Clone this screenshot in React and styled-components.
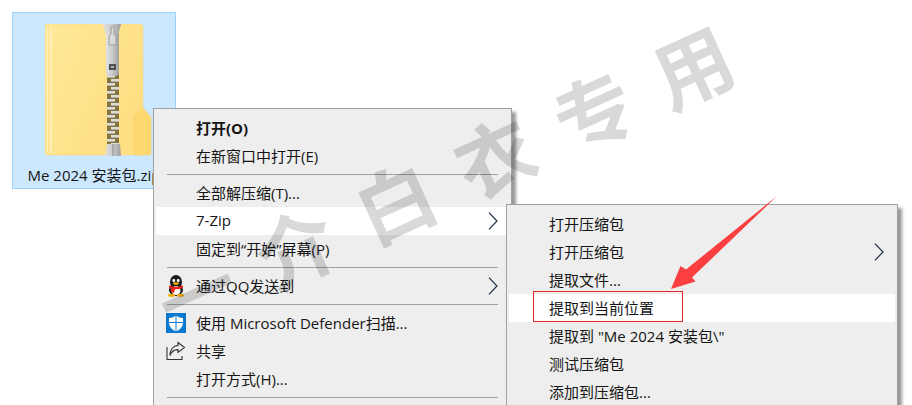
import styled, { createGlobalStyle } from "styled-components";

const GlobalStyle = createGlobalStyle`
  html, body {
    margin: 0;
    padding: 0;
    background: #fff;
  }
`;

const Desktop = styled.div`
  position: relative;
  width: 912px;
  height: 405px;
  overflow: hidden;
  padding: 12px;
  box-sizing: border-box;
  background: #fff;
  font-family: "Open Sans", "Noto Sans CJK SC", sans-serif;
  color: #151515;
`;

const FileTile = styled.div`
  display: flex;
  flex-direction: column;
  align-items: center;
  box-sizing: border-box;
  width: 164px;
  height: 177px;
  padding-top: 11px;
  background: #cce8ff;
  border: 1px solid #99d1ff;
`;

const FolderWrap = styled.div`
  display: flex;
  margin-left: 10px;
`;

const FileName = styled.div`
  margin-top: 7px;
  font-size: 15px;
  line-height: 22px;
  white-space: nowrap;
`;

const Menu = styled.div`
  position: absolute;
  left: ${(p) => p.$left}px;
  top: ${(p) => p.$top}px;
  width: ${(p) => p.$width}px;
  bottom: -20px;
  box-sizing: border-box;
  padding: 5px 2px;
  background: #eee;
  border: 1px solid #a0a0a0;
  box-shadow: 4px 4px 3px rgba(0, 0, 0, 0.4);
`;

const Row = styled.div`
  display: flex;
  align-items: center;
  height: 28px;
  padding-right: 11px;
  font-size: 15px;
  font-weight: ${(p) => (p.$bold ? 700 : 400)};
  background: ${(p) => (p.$active ? "#fff" : "transparent")};
`;

const IconSlot = styled.span`
  display: flex;
  align-items: center;
  justify-content: flex-start;
  flex: none;
  width: 40px;
  padding-left: 10px;
  box-sizing: border-box;
`;

const Label = styled.span`
  flex: 1;
  margin-top: -2px;
  white-space: nowrap;
`;

const Separator = styled.div`
  height: 1px;
  margin: 4px 11px 4px 11px;
  background: #a0a0a0;
`;

const Highlight = styled.div`
  position: absolute;
  left: 533px;
  top: 291px;
  width: 150px;
  height: 31px;
  box-sizing: border-box;
  border: 1px solid #e5282a;
`;

const Overlay = styled.svg`
  position: absolute;
  left: 0;
  top: 0;
  pointer-events: none;
`;

const Watermark = styled.div`
  position: absolute;
  left: 160px;
  top: 267px;
  display: flex;
  gap: 31px;
  font-family: "Noto Sans CJK SC", sans-serif;
  font-size: 78px;
  line-height: 1;
  font-weight: 700;
  color: rgba(0, 0, 0, 0.15);
  transform: rotate(-24.5deg);
  transform-origin: 0 50%;
  pointer-events: none;
  white-space: nowrap;
`;

const Chevron = () => (
  <svg width="10" height="18" viewBox="0 0 10 18">
    <path d="M1 0.7 L9 9 L1 17.3" fill="none" stroke="#1d2b45" strokeWidth="1.2" />
  </svg>
);

const ZipFolder = () => (
  <svg width="108" height="133" viewBox="0 0 108 133">
    <defs>
      <linearGradient id="paper" x1="0" y1="0" x2="1" y2="0.6">
        <stop offset="0" stopColor="#ffe898" />
        <stop offset="1" stopColor="#fedf82" />
      </linearGradient>
      <linearGradient id="metal" x1="0" y1="0" x2="1" y2="0">
        <stop offset="0" stopColor="#e2e2e2" />
        <stop offset="0.5" stopColor="#c9c9c9" />
        <stop offset="1" stopColor="#9f9f9f" />
      </linearGradient>
    </defs>
    <path d="M0 2 Q0 0 2 0 H95 Q98 0 98 3 V131 H1 Q0 131 0 130 Z" fill="url(#paper)" stroke="#f1d27a" strokeWidth="0.5" />
    <rect x="5" y="4" width="2" height="125" fill="#fff0b8" />
    <rect x="2" y="4" width="1" height="125" fill="#fff0b8" />
    <path d="M89 92 L97 83 L106 93 V129 Q106 131 104 131 H91 Q89 131 89 129 Z" fill="#fdd86f" stroke="#f3cd68" strokeWidth="0.5" />
    <rect x="62" y="50" width="12" height="72" fill="#84743f" />
    {Array.from({ length: 18 }, (_, i) => (
      <rect key={i} x={i % 2 ? 66 : 62} y={51 + i * 4} width="8" height="2.6" fill="#dcdcda" />
    ))}
    <path d="M58 0 H76 L73 12 H61 Z" fill="url(#metal)" />
    <path d="M61 9 H74 V50 L72 52 H63 L61 50 Z" fill="url(#metal)" />
    <path d="M66 3 H69 V10 L71 12 V21 H64 V12 L66 10 Z" fill="#d8d8d8" stroke="#8a8a8a" strokeWidth="0.7" />
    <rect x="64" y="40" width="7" height="6" fill="#4f4f4f" />
    <rect x="66" y="42" width="3" height="2" fill="#b0b0b0" />
    <path d="M62 120 H75 L76 132 H60 Z" fill="url(#metal)" />
    <rect x="67.5" y="120" width="1" height="12" fill="#8c8c8c" />
  </svg>
);

const QQIcon = () => (
  <svg width="20" height="22" viewBox="0 0 20 22">
    <ellipse cx="10" cy="7" rx="6" ry="7" fill="#1a1a1a" />
    <ellipse cx="10" cy="15" rx="7" ry="6" fill="#1a1a1a" />
    <ellipse cx="10" cy="15.5" rx="4.5" ry="4.5" fill="#fff" />
    <ellipse cx="7.8" cy="5.5" rx="1.4" ry="1.8" fill="#fff" />
    <ellipse cx="12.2" cy="5.5" rx="1.4" ry="1.8" fill="#fff" />
    <ellipse cx="10" cy="8.6" rx="3" ry="1.3" fill="#f4b400" />
    <path d="M3 10.5 Q10 13 17 10.5 V13 Q10 15.5 3 13 Z" fill="#e5231b" />
    <path d="M5 13 L9 14 L8 18 L5 17 Z" fill="#e5231b" />
    <ellipse cx="5.5" cy="20.3" rx="3.6" ry="1.5" fill="#f2a900" />
    <ellipse cx="14.5" cy="20.3" rx="3.6" ry="1.5" fill="#f2a900" />
  </svg>
);

const ShieldIcon = () => (
  <svg width="20" height="20" viewBox="0 0 20 20">
    <rect width="20" height="20" fill="#0b78d0" />
    <path d="M10 2.5 Q13.5 5 17 5 V10 Q17 15 10 18.5 Q3 15 3 10 V5 Q6.5 5 10 2.5 Z" fill="#fff" />
    <path d="M9.5 2 H10.5 V19 H9.5 Z M2.5 9 H17.5 V10 H2.5 Z" fill="#0b78d0" />
  </svg>
);

const ShareIcon = () => (
  <svg width="20" height="20" viewBox="0 0 20 20" fill="none" stroke="#333" strokeWidth="1.1">
    <path d="M1 6 V18.5 H16 V15" />
    <path d="M12 1.5 L18.5 6.5 L12 11.5 V8.6 C8 8.4 5.5 10.5 4 14.5 C4 9 7 4.8 12 4.4 Z" />
  </svg>
);

const mainItems = [
  { label: "打开(O)", bold: true },
  { label: "在新窗口中打开(E)" },
  { sep: true },
  { label: "全部解压缩(T)..." },
  { label: "7-Zip", active: true, more: true },
  { label: "固定到“开始”屏幕(P)" },
  { sep: true },
  { label: "通过QQ发送到", icon: <QQIcon />, more: true },
  { sep: true },
  { label: "使用 Microsoft Defender扫描...", icon: <ShieldIcon /> },
  { label: "共享", icon: <ShareIcon /> },
  { label: "打开方式(H)..." },
  { sep: true },
];

const subItems = [
  { label: "打开压缩包" },
  { label: "打开压缩包", more: true },
  { label: "提取文件..." },
  { label: "提取到当前位置", active: true },
  { label: "提取到 \"Me 2024 安装包\\\"" },
  { label: "测试压缩包" },
  { label: "添加到压缩包..." },
];

const renderItems = (items) =>
  items.map((item, i) =>
    item.sep ? (
      <Separator key={i} />
    ) : (
      <Row key={i} $bold={item.bold} $active={item.active}>
        <IconSlot>{item.icon}</IconSlot>
        <Label>{item.label}</Label>
        {item.more && <Chevron />}
      </Row>
    )
  );

export default function App() {
  return (
    <>
      <GlobalStyle />
      <Desktop>
        <FileTile>
          <FolderWrap>
            <ZipFolder />
          </FolderWrap>
          <FileName>Me 2024 安装包.zip</FileName>
        </FileTile>
        <Menu $left={153} $top={108} $width={359}>
          {renderItems(mainItems)}
        </Menu>
        <Menu $left={506} $top={204} $width={392}>
          {renderItems(subItems)}
        </Menu>
        <Highlight />
        <Overlay width="912" height="405">
          <polygon points="777,196 686,269.5 680.5,266 671,289 695.5,281.5 692,277.5" fill="#fb3f41" />
        </Overlay>
        <Watermark>
          <span>一</span>
          <span>介</span>
          <span>白</span>
          <span>衣</span>
          <span>专</span>
          <span>用</span>
        </Watermark>
      </Desktop>
    </>
  );
}
